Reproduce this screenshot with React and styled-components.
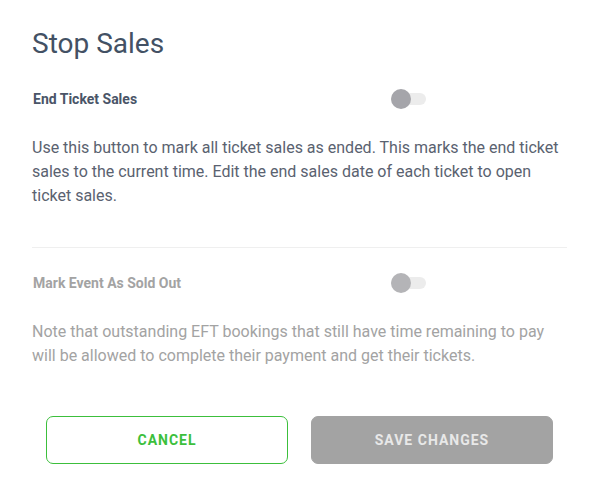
import React from "react";
import styled, { createGlobalStyle } from "styled-components";

const Global = createGlobalStyle`
  html, body { margin: 0; padding: 0; background: #fff; }
  body { font-family: Roboto, "Noto Sans", Arial, sans-serif; }
  * { box-sizing: border-box; }
`;

const Modal = styled.div`
  width: 595px;
  height: 489px;
  padding: 28px 28px 0 32px;
  background: #fff;
`;

const Title = styled.h2`
  margin: 0;
  font-size: 28px;
  font-weight: 400;
  line-height: 32px;
  color: #435164;
`;

const Section = styled.div`
  padding: ${(p) => p.$pad};
  border-bottom: ${(p) => (p.$divider ? "1px solid #efefef" : "none")};
`;

const Row = styled.div`
  display: grid;
  grid-template-columns: 359px auto;
  align-items: center;
  height: 20px;
`;

const Label = styled.span`
  font-size: 14px;
  font-weight: 700;
  color: ${(p) => (p.$muted ? "#a3a3a3" : "#4a5568")};
  padding-left: 1px;
`;

const Track = styled.span`
  position: relative;
  display: inline-block;
  width: 35px;
  height: 12px;
  border-radius: 6px;
  background: #ececec;
`;

const Thumb = styled.span`
  position: absolute;
  left: 0;
  top: -4px;
  width: 20px;
  height: 20px;
  border-radius: 50%;
  background: ${(p) => (p.$muted ? "#b4b4b7" : "#a5a5aa")};
`;

const Text = styled.p`
  margin: 0;
  font-size: 16px;
  line-height: 24px;
  color: ${(p) => (p.$muted ? "#a3a3a3" : "#5a6270")};
`;

const Actions = styled.div`
  display: flex;
  justify-content: center;
  gap: 23px;
  margin-top: 48px;
  margin-right: -28px;
  margin-left: -32px;
  padding-left: 4px;
`;

const Button = styled.button`
  width: 242px;
  height: 48px;
  border-radius: 7px;
  font-family: Roboto, Arial, sans-serif;
  font-size: 14px;
  font-weight: 700;
  letter-spacing: 1px;
  text-transform: uppercase;
  border: 1px solid ${(p) => (p.$primary ? "#a3a3a3" : "#3cbf3c")};
  background: ${(p) => (p.$primary ? "#a3a3a3" : "#fff")};
  color: ${(p) => (p.$primary ? "#e8e8e8" : "#3cbf3c")};
`;

function Toggle({ muted }) {
  return (
    <Track>
      <Thumb $muted={muted} />
    </Track>
  );
}

export default function App() {
  return (
    <>
      <Global />
      <Modal>
        <Title>Stop Sales</Title>
        <Section $pad="29px 0 0" $divider>
          <Row>
            <Label>End Ticket Sales</Label>
            <Toggle />
          </Row>
          <Text style={{ marginTop: 27, marginBottom: 39 }}>
            Use this button to mark all ticket sales as ended. This marks the end ticket
            sales to the current time. Edit the end sales date of each ticket to open
            ticket sales.
          </Text>
        </Section>
        <Section $pad="25px 0 0">
          <Row>
            <Label $muted>Mark Event As Sold Out</Label>
            <Toggle muted />
          </Row>
          <Text $muted style={{ marginTop: 27 }}>
            Note that outstanding EFT bookings that still have time remaining to pay
            will be allowed to complete their payment and get their tickets.
          </Text>
        </Section>
        <Actions>
          <Button>Cancel</Button>
          <Button $primary>Save Changes</Button>
        </Actions>
      </Modal>
    </>
  );
}
